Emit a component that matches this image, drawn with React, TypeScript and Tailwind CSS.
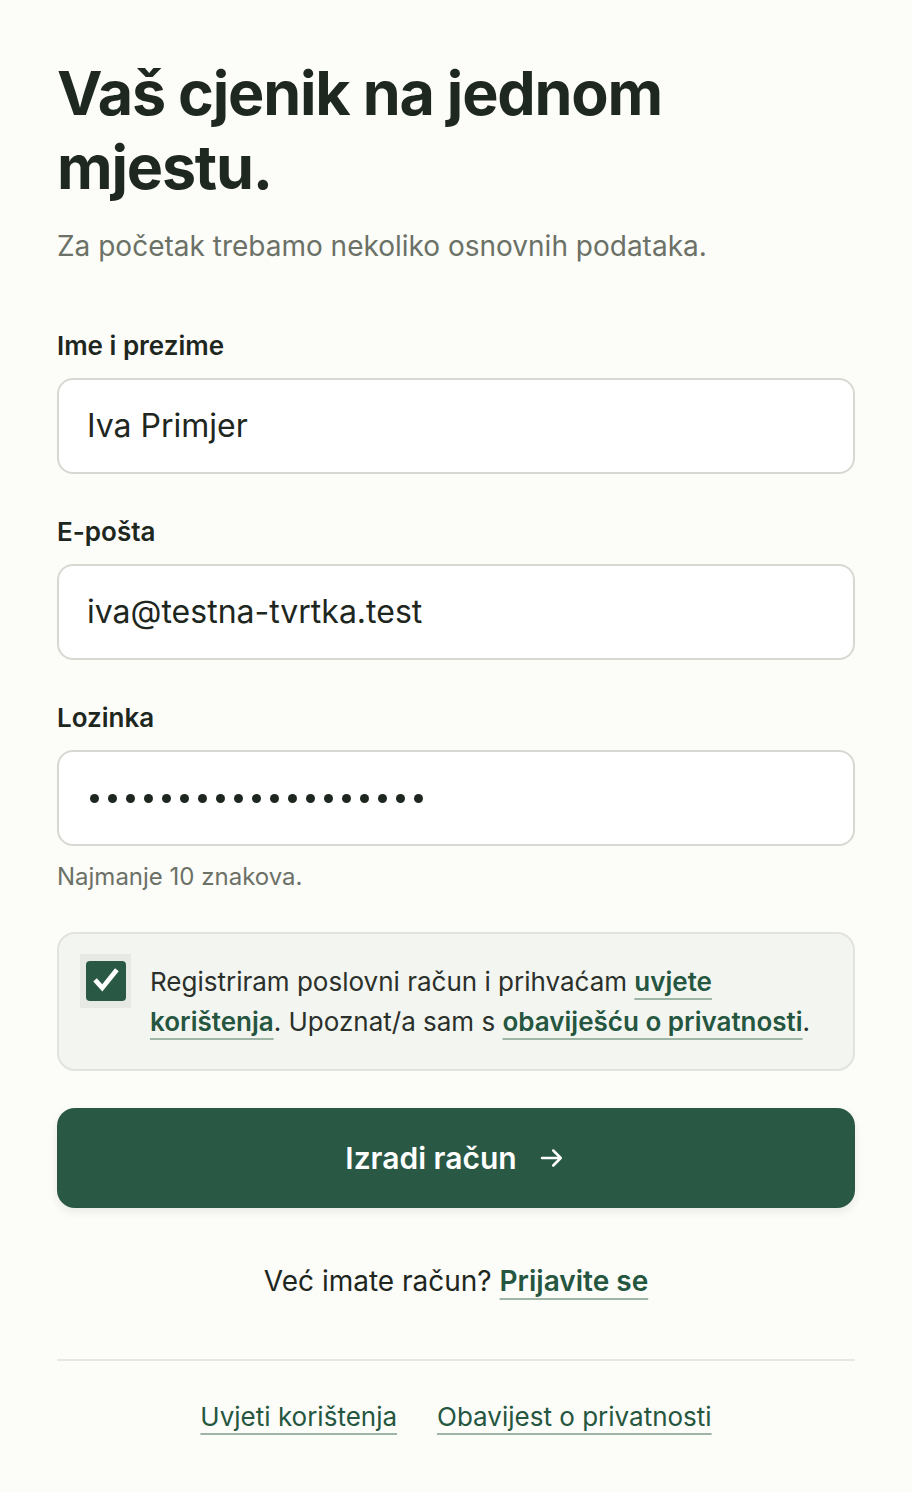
import React from "react";

const font = { fontFamily: "Inter, 'Noto Sans', sans-serif" };

function Field({ label, children }: { label: string; children: React.ReactNode }) {
  return (
    <div className="flex flex-col">
      <label className="text-[26px] font-semibold leading-[32px] text-[#1e2620]">{label}</label>
      <div className="mt-[16px] flex h-[96px] items-center rounded-[16px] border-2 border-[#d6d9d1] bg-white px-[28px]">
        {children}
      </div>
    </div>
  );
}

export default function App() {
  return (
    <div style={font} className="min-h-[1492px] bg-[#fcfcf8] px-[57px] pt-[56px] text-[#1e2620]">
      <h1 className="text-[61px] font-bold leading-[74px] tracking-[-0.02em] text-[#1f2820]">
        Vaš cjenik na jednom
        <br />
        mjestu.
      </h1>
      <p className="mt-[24px] text-[28px] leading-[36px] text-[#6b7166]">
        Za početak trebamo nekoliko osnovnih podataka.
      </p>

      <div className="mt-[66px] flex flex-col gap-[42px]">
        <Field label="Ime i prezime">
          <span className="text-[32px] text-[#1e2620]">Iva Primjer</span>
        </Field>
        <Field label="E-pošta">
          <span className="text-[32px] text-[#1e2620]">iva@testna-tvrtka.test</span>
        </Field>
        <div className="flex flex-col">
          <Field label="Lozinka">
            <div className="flex items-center gap-[9px] pl-[3px]">
              {Array.from({ length: 19 }).map((_, i) => (
                <span key={i} className="block h-[9px] w-[9px] rounded-full bg-[#1e2620]" />
              ))}
            </div>
          </Field>
          <p className="mt-[16px] text-[24px] leading-[30px] text-[#6b7166]">Najmanje 10 znakova.</p>
        </div>
      </div>

      <div className="mt-[40px] flex items-start gap-[19px] rounded-[18px] border-2 border-[#e1e4dc] bg-[#f3f5f0] pb-[27px] pl-[21px] pr-[22px] pt-[28px]">
        <div className="mt-[-8px] flex h-[54px] w-[51px] shrink-0 items-center justify-center bg-[#e7eae4]">
          <div className="flex h-[40px] w-[40px] items-center justify-center rounded-[4px] bg-[#295845]">
            <svg width="30" height="30" viewBox="0 0 24 24" fill="none">
              <path d="M4.5 12.5l4.5 5L19.5 4.5" stroke="white" strokeWidth="3.8" strokeLinecap="square" />
            </svg>
          </div>
        </div>
        <p className="text-[26px] leading-[40px] text-[#2b302b]">
          Registriram poslovni račun i prihvaćam{" "}
          <a className="font-semibold text-[#255640] underline decoration-[#9fb5a6] decoration-2 underline-offset-[7px]">
            uvjete korištenja
          </a>
          . Upoznat/a sam s{" "}
          <a className="font-semibold text-[#255640] underline decoration-[#9fb5a6] decoration-2 underline-offset-[7px]">
            obaviješću o privatnosti
          </a>
          .
        </p>
      </div>

      <button className="mt-[37px] flex h-[100px] w-full items-center justify-center gap-[20px] rounded-[18px] bg-[#295845] text-[30px] font-semibold text-white shadow-[0_4px_10px_rgba(0,0,0,0.08)]">
        <span>Izradi račun</span>
        <svg width="30" height="30" viewBox="0 0 24 24" fill="none" stroke="white" strokeWidth="2" strokeLinecap="round" strokeLinejoin="round">
          <path d="M4 12h15M13 6l6 6-6 6" />
        </svg>
      </button>

      <p className="mt-[55px] text-center text-[28px] leading-[36px] text-[#1e2620]">
        Već imate račun?{" "}
        <a className="font-semibold text-[#255640] underline decoration-[#9fb5a6] decoration-2 underline-offset-[7px]">
          Prijavite se
        </a>
      </p>

      <div className="mt-[60px] h-[2px] bg-[#e6e7e1]" />

      <div className="mt-[38px] flex justify-center gap-[40px] text-[26px] leading-[36px] text-[#255640]">
        <a className="underline decoration-[#9fb5a6] decoration-2 underline-offset-[7px]">Uvjeti korištenja</a>
        <a className="underline decoration-[#9fb5a6] decoration-2 underline-offset-[7px]">Obavijest o privatnosti</a>
      </div>
    </div>
  );
}
